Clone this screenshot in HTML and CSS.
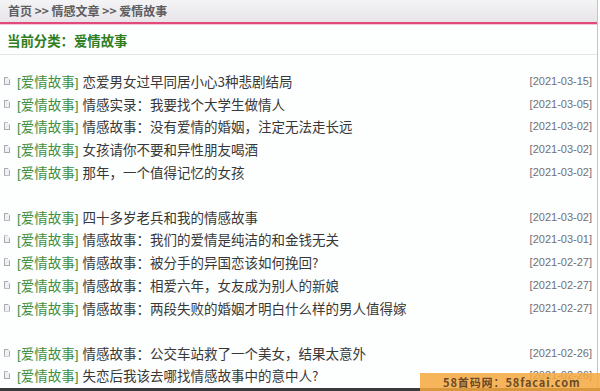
FILE: index.html
```html
<!DOCTYPE html>
<html lang="zh">
<head>
<meta charset="utf-8">
<title>爱情故事</title>
<link rel="stylesheet" href="styles.css">
</head>
<body>
<div class="page">
  <div class="crumb">首页 &gt;&gt; 情感文章 &gt;&gt; 爱情故事</div>
  <div class="cat">当前分类：爱情故事</div>
  <div class="lists">
    <ul class="group">
      <li class="row"><span class="ico"></span><span class="tag">[爱情故事]</span><span class="title">恋爱男女过早同居小心3种悲剧结局</span><span class="date">[2021-03-15]</span></li>
      <li class="row"><span class="ico"></span><span class="tag">[爱情故事]</span><span class="title">情感实录：我要找个大学生做情人</span><span class="date">[2021-03-05]</span></li>
      <li class="row"><span class="ico"></span><span class="tag">[爱情故事]</span><span class="title">情感故事：没有爱情的婚姻，注定无法走长远</span><span class="date">[2021-03-02]</span></li>
      <li class="row"><span class="ico"></span><span class="tag">[爱情故事]</span><span class="title">女孩请你不要和异性朋友喝酒</span><span class="date">[2021-03-02]</span></li>
      <li class="row"><span class="ico"></span><span class="tag">[爱情故事]</span><span class="title">那年，一个值得记忆的女孩</span><span class="date">[2021-03-02]</span></li>
    </ul>
    <ul class="group">
      <li class="row"><span class="ico"></span><span class="tag">[爱情故事]</span><span class="title">四十多岁老兵和我的情感故事</span><span class="date">[2021-03-02]</span></li>
      <li class="row"><span class="ico"></span><span class="tag">[爱情故事]</span><span class="title">情感故事：我们的爱情是纯洁的和金钱无关</span><span class="date">[2021-03-01]</span></li>
      <li class="row"><span class="ico"></span><span class="tag">[爱情故事]</span><span class="title">情感故事：被分手的异国恋该如何挽回?</span><span class="date">[2021-02-27]</span></li>
      <li class="row"><span class="ico"></span><span class="tag">[爱情故事]</span><span class="title">情感故事：相爱六年，女友成为别人的新娘</span><span class="date">[2021-02-27]</span></li>
      <li class="row"><span class="ico"></span><span class="tag">[爱情故事]</span><span class="title">情感故事：两段失败的婚姻才明白什么样的男人值得嫁</span><span class="date">[2021-02-27]</span></li>
    </ul>
    <ul class="group">
      <li class="row"><span class="ico"></span><span class="tag">[爱情故事]</span><span class="title">情感故事：公交车站救了一个美女，结果太意外</span><span class="date">[2021-02-26]</span></li>
      <li class="row"><span class="ico"></span><span class="tag">[爱情故事]</span><span class="title">失恋后我该去哪找情感故事中的意中人?</span><span class="date">[2021-02-26]</span></li>
    </ul>
  </div>
</div>
<div class="bottom-strip"></div>
<div class="watermark">58首码网：58facai.com</div>
</body>
</html>
```

FILE: styles.css
```css
html, body {
  margin: 0;
  padding: 0;
  background: #fdfefe;
  overflow: hidden;
}
body {
  width: 600px;
  height: 391px;
  position: relative;
  font-family: "Noto Sans CJK SC", "Liberation Sans", sans-serif;
}
.page {
  width: 598px;
  height: 391px;
  border-right: 1px solid #c4c4c6;
  box-sizing: border-box;
}
.crumb {
  height: 22px;
  line-height: 21px;
  padding-left: 8px;
  font-size: 12px;
  font-weight: bold;
  color: #5e5e62;
  background: linear-gradient(#f4f3f5, #e7e5e9);
  border-bottom: 2px solid #e2497b;
  box-shadow: 0 1px 0 #f6c6d6;
}
.cat {
  height: 30px;
  line-height: 32px;
  padding-left: 7px;
  font-size: 13.4px;
  font-weight: bold;
  color: #2f7f1f;
  border-bottom: 1px solid #e6e6e8;
}
.lists {
  padding-top: 14.6px;
}
.group {
  list-style: none;
  margin: 0 0 22.4px 0;
  padding: 0;
}
.row {
  display: flex;
  align-items: center;
  height: 22.7px;
  font-size: 13.5px;
  white-space: nowrap;
}
.ico {
  width: 6px;
  height: 8px;
  margin-left: 4px;
  margin-right: 7px;
  border: 1px solid #a9abb4;
  background: #eef0f4;
  box-sizing: border-box;
  clip-path: polygon(0 0, 60% 0, 100% 35%, 100% 100%, 0 100%);
  flex: none;
}
.tag {
  color: #3f8f3f;
  margin-right: 4px;
  font-family: "Liberation Sans", "Noto Sans CJK SC", sans-serif;
}
.title {
  color: #383838;
  flex: 1;
}
.date {
  font-family: "Liberation Sans", sans-serif;
  font-size: 11px;
  color: #707074;
  margin-right: 5px;
}
.bottom-strip {
  position: absolute;
  left: 0;
  right: 0;
  bottom: 0;
  height: 3px;
  background: #3a3a3c;
}
.watermark {
  position: absolute;
  left: 420px;
  right: 0;
  bottom: 0;
  height: 18px;
  line-height: 18px;
  padding-left: 23px;
  background: rgba(246, 168, 62, 0.85);
  color: #6a4a2a;
  font-family: "Noto Sans CJK SC", "Liberation Sans", sans-serif;
  font-size: 11px;
  font-weight: bold;
  letter-spacing: 0.9px;
}
```
